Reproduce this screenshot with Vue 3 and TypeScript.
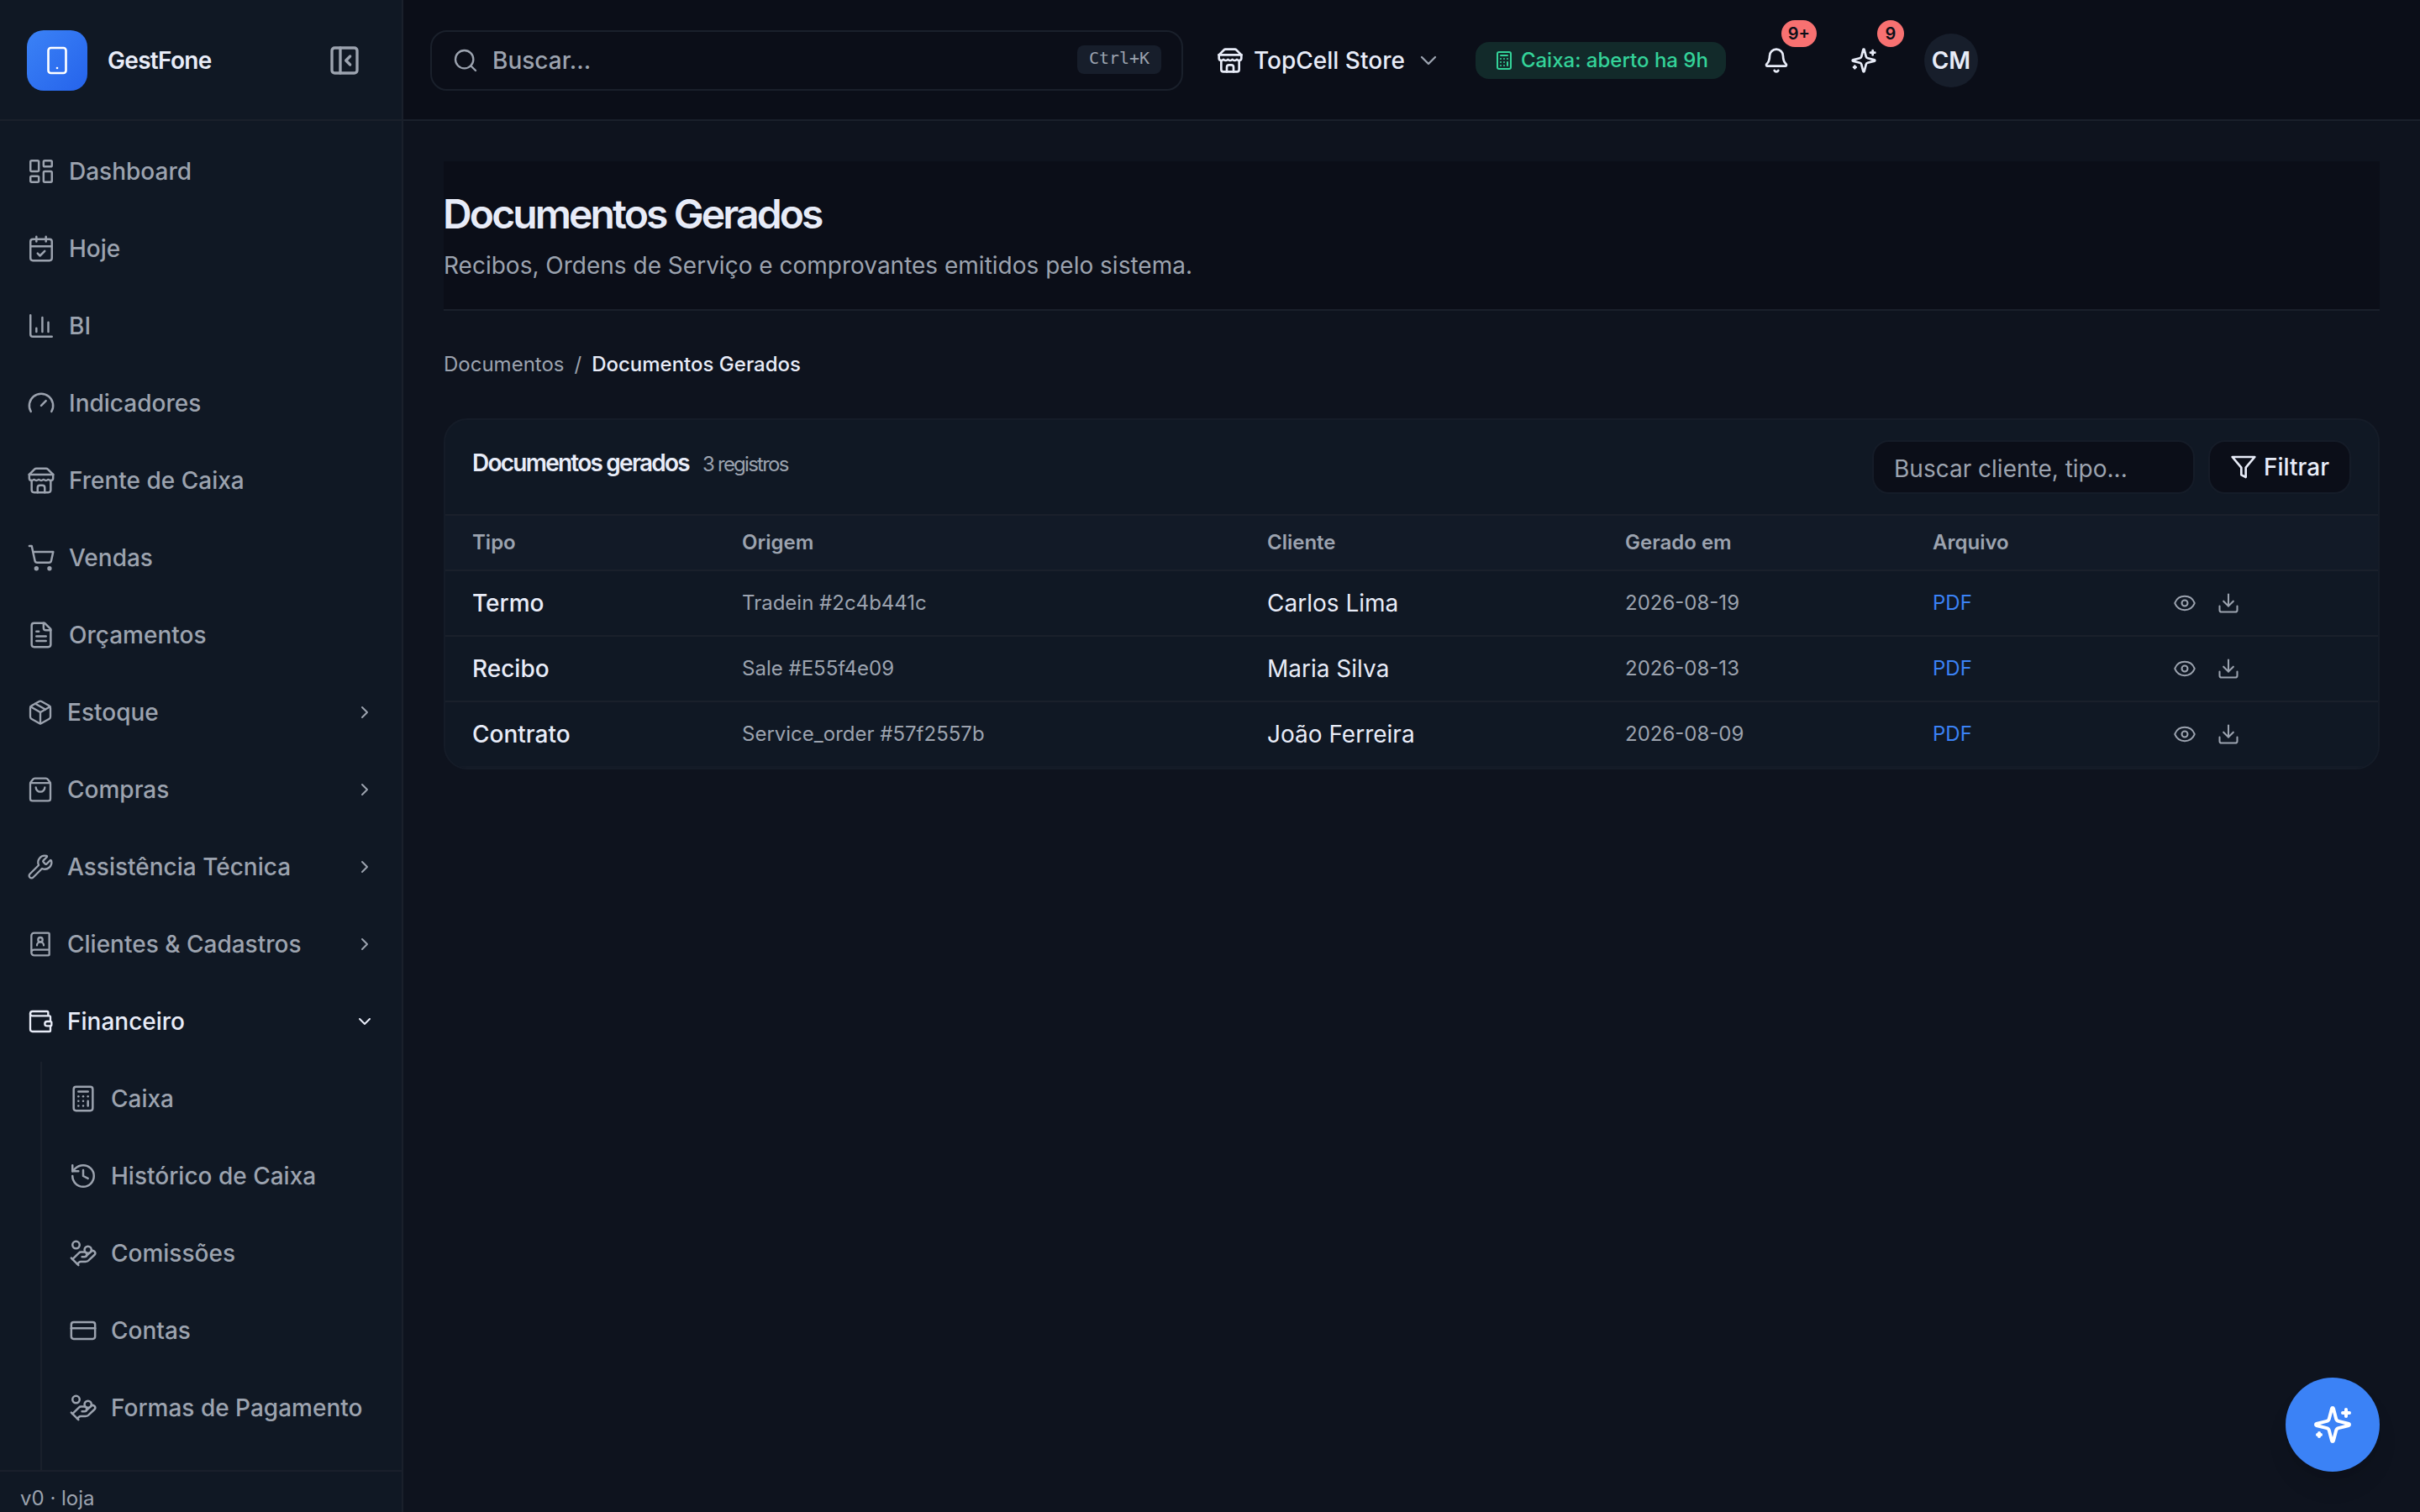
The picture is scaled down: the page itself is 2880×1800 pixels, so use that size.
<script setup lang="ts">
import { defineComponent, h } from 'vue'

const glyphs: Record<string, string> = {
  phone: '<rect x="5" y="2" width="14" height="20" rx="2"/><path d="M12 18h.01"/>',
  panel: '<rect x="3" y="3" width="18" height="18" rx="2"/><path d="M9 3v18"/><path d="m16 15-3-3 3-3"/>',
  dashboard: '<rect x="3" y="3" width="7" height="9" rx="1"/><rect x="14" y="3" width="7" height="5" rx="1"/><rect x="14" y="12" width="7" height="9" rx="1"/><rect x="3" y="16" width="7" height="5" rx="1"/>',
  calendar: '<path d="M8 2v4"/><path d="M16 2v4"/><rect x="3" y="4" width="18" height="18" rx="2"/><path d="M3 10h18"/><path d="m9 16 2 2 4-4"/>',
  chart: '<path d="M3 3v16a2 2 0 0 0 2 2h16"/><path d="M18 17V9"/><path d="M13 17V5"/><path d="M8 17v-3"/>',
  gauge: '<path d="m12 14 4-4"/><path d="M3.34 19a10 10 0 1 1 17.32 0"/>',
  store: '<path d="m2 7 4.41-4.41A2 2 0 0 1 7.83 2h8.34a2 2 0 0 1 1.42.59L22 7"/><path d="M4 12v8a2 2 0 0 0 2 2h12a2 2 0 0 0 2-2v-8"/><path d="M15 22v-4a2 2 0 0 0-2-2h-2a2 2 0 0 0-2 2v4"/><path d="M2 7h20"/><path d="M22 7v3a2 2 0 0 1-2 2a2.7 2.7 0 0 1-1.59-.63.7.7 0 0 0-.82 0A2.7 2.7 0 0 1 16 12a2.7 2.7 0 0 1-1.59-.63.7.7 0 0 0-.82 0A2.7 2.7 0 0 1 12 12a2.7 2.7 0 0 1-1.59-.63.7.7 0 0 0-.82 0A2.7 2.7 0 0 1 8 12a2.7 2.7 0 0 1-1.59-.63.7.7 0 0 0-.82 0A2.7 2.7 0 0 1 4 12a2 2 0 0 1-2-2V7"/>',
  cart: '<circle cx="8" cy="21" r="1"/><circle cx="19" cy="21" r="1"/><path d="M2.05 2.05h2l2.66 12.42a2 2 0 0 0 2 1.58h9.78a2 2 0 0 0 1.95-1.57l1.65-7.43H5.12"/>',
  file: '<path d="M15 2H6a2 2 0 0 0-2 2v16a2 2 0 0 0 2 2h12a2 2 0 0 0 2-2V7Z"/><path d="M14 2v4a2 2 0 0 0 2 2h4"/><path d="M10 9H8"/><path d="M16 13H8"/><path d="M16 17H8"/>',
  box: '<path d="M11 21.73a2 2 0 0 0 2 0l7-4A2 2 0 0 0 21 16V8a2 2 0 0 0-1-1.73l-7-4a2 2 0 0 0-2 0l-7 4A2 2 0 0 0 3 8v8a2 2 0 0 0 1 1.73z"/><path d="M12 22V12"/><path d="M3.29 7 12 12l8.71-5"/><path d="m7.5 4.27 9 5.15"/>',
  bag: '<path d="M16 10a4 4 0 0 1-8 0"/><path d="M3.103 6.034h17.794"/><path d="M3.4 5.467a2 2 0 0 0-.4 1.2V20a2 2 0 0 0 2 2h14a2 2 0 0 0 2-2V6.667a2 2 0 0 0-.4-1.2l-2-2.667A2 2 0 0 0 17 2H7a2 2 0 0 0-1.6.8z"/>',
  wrench: '<path d="M14.7 6.3a1 1 0 0 0 0 1.4l1.6 1.6a1 1 0 0 0 1.4 0l3.106-3.105c.32-.322.863-.22.983.218a6 6 0 0 1-8.259 7.057l-7.91 7.91a1 1 0 0 1-2.999-3l7.91-7.91a6 6 0 0 1 7.057-8.259c.438.12.54.662.219.984z"/>',
  contacts: '<path d="M15 13a3 3 0 1 0-6 0"/><circle cx="12" cy="8" r="2"/><path d="M4 19.5v-15A2.5 2.5 0 0 1 6.5 2H19a1 1 0 0 1 1 1v18a1 1 0 0 1-1 1H6.5a1 1 0 0 1 0-5H20"/>',
  wallet: '<path d="M19 7V4a1 1 0 0 0-1-1H5a2 2 0 0 0 0 4h15a1 1 0 0 1 1 1v4h-3a2 2 0 0 0 0 4h3a1 1 0 0 0 1-1v-2a1 1 0 0 0-1-1"/><path d="M3 5v14a2 2 0 0 0 2 2h15a1 1 0 0 0 1-1v-4"/>',
  calculator: '<rect x="4" y="2" width="16" height="20" rx="2"/><path d="M8 6h8"/><path d="M16 14v4"/><path d="M16 10h.01"/><path d="M12 10h.01"/><path d="M8 10h.01"/><path d="M12 14h.01"/><path d="M8 14h.01"/><path d="M12 18h.01"/><path d="M8 18h.01"/>',
  history: '<path d="M3 12a9 9 0 1 0 9-9 9.75 9.75 0 0 0-6.74 2.74L3 8"/><path d="M3 3v5h5"/><path d="M12 7v5l4 2"/>',
  coins: '<path d="M11 15h2a2 2 0 1 0 0-4h-3c-.6 0-1.1.2-1.4.6L3 17"/><path d="m7 21 1.6-1.4c.3-.4.8-.6 1.4-.6h4c1.1 0 2.1-.4 2.8-1.2l4.6-4.4a2 2 0 0 0-2.75-2.91l-4.2 3.9"/><path d="m2 16 6 6"/><circle cx="16" cy="9" r="2.9"/><circle cx="6" cy="5" r="3"/>',
  card: '<rect x="2" y="5" width="20" height="14" rx="2"/><path d="M2 10h20"/>',
  right: '<path d="m9 18 6-6-6-6"/>',
  down: '<path d="m6 9 6 6 6-6"/>',
  search: '<path d="m21 21-4.34-4.34"/><circle cx="11" cy="11" r="8"/>',
  bell: '<path d="M10.268 21a2 2 0 0 0 3.464 0"/><path d="M3.262 15.326A1 1 0 0 0 4 17h16a1 1 0 0 0 .74-1.673C19.41 13.956 18 12.499 18 8A6 6 0 0 0 6 8c0 4.499-1.411 5.956-2.738 7.326"/>',
  sparkles: '<path d="M9.937 15.5A2 2 0 0 0 8.5 14.063l-6.135-1.582a.5.5 0 0 1 0-.962L8.5 9.936A2 2 0 0 0 9.937 8.5l1.582-6.135a.5.5 0 0 1 .963 0L14.063 8.5A2 2 0 0 0 15.5 9.937l6.135 1.581a.5.5 0 0 1 0 .964L15.5 14.063a2 2 0 0 0-1.437 1.437l-1.582 6.135a.5.5 0 0 1-.963 0z"/><path d="M20 3v4"/><path d="M22 5h-4"/><path d="M4 17v2"/><path d="M5 18H3"/>',
  filter: '<path d="M22 3H2l8 9.46V19l4 2v-8.54z"/>',
  eye: '<path d="M2.062 12.348a1 1 0 0 1 0-.696 10.75 10.75 0 0 1 19.876 0 1 1 0 0 1 0 .696 10.75 10.75 0 0 1-19.876 0"/><circle cx="12" cy="12" r="3"/>',
  download: '<path d="M12 15V3"/><path d="M21 15v4a2 2 0 0 1-2 2H5a2 2 0 0 1-2-2v-4"/><path d="m7 10 5 5 5-5"/>',
}

const Icon = defineComponent({
  props: {
    name: { type: String, required: true },
    size: { type: Number, default: 32 },
    stroke: { type: Number, default: 1.75 },
  },
  setup(props) {
    return () =>
      h('svg', {
        width: props.size,
        height: props.size,
        viewBox: '0 0 24 24',
        fill: 'none',
        stroke: 'currentColor',
        'stroke-width': props.stroke,
        'stroke-linecap': 'round',
        'stroke-linejoin': 'round',
        'aria-hidden': 'true',
        innerHTML: glyphs[props.name],
      })
  },
})

interface NavEntry {
  label: string
  icon: string
}

const links: NavEntry[] = [
  { label: 'Dashboard', icon: 'dashboard' },
  { label: 'Hoje', icon: 'calendar' },
  { label: 'BI', icon: 'chart' },
  { label: 'Indicadores', icon: 'gauge' },
  { label: 'Frente de Caixa', icon: 'store' },
  { label: 'Vendas', icon: 'cart' },
  { label: 'Orçamentos', icon: 'file' },
]

const groups: (NavEntry & { open?: boolean })[] = [
  { label: 'Estoque', icon: 'box' },
  { label: 'Compras', icon: 'bag' },
  { label: 'Assistência Técnica', icon: 'wrench' },
  { label: 'Clientes & Cadastros', icon: 'contacts' },
  { label: 'Financeiro', icon: 'wallet', open: true },
]

const finance: NavEntry[] = [
  { label: 'Caixa', icon: 'calculator' },
  { label: 'Histórico de Caixa', icon: 'history' },
  { label: 'Comissões', icon: 'coins' },
  { label: 'Contas', icon: 'card' },
  { label: 'Formas de Pagamento', icon: 'coins' },
]

const documents = [
  { type: 'Termo', origin: 'Tradein #2c4b441c', client: 'Carlos Lima', date: '2026-08-19' },
  { type: 'Recibo', origin: 'Sale #E55f4e09', client: 'Maria Silva', date: '2026-08-13' },
  { type: 'Contrato', origin: 'Service_order #57f2557b', client: 'João Ferreira', date: '2026-08-09' },
]
</script>

<template>
  <div class="app">
    <aside class="sidebar">
      <div class="brand">
        <span class="logo"><Icon name="phone" :size="36" /></span>
        <span class="brand-name">GestFone</span>
        <button class="collapse" aria-label="Recolher menu"><Icon name="panel" :size="40" :stroke="2" /></button>
      </div>
      <nav class="nav">
        <a v-for="l in links" :key="l.label" class="item">
          <Icon :name="l.icon" :size="34" />
          <span>{{ l.label }}</span>
        </a>
        <a v-for="g in groups" :key="g.label" class="item" :class="{ open: g.open }">
          <Icon :name="g.icon" />
          <span>{{ g.label }}</span>
          <Icon class="chevron" :name="g.open ? 'down' : 'right'" :size="24" :stroke="2" />
        </a>
        <div class="subnav">
          <a v-for="f in finance" :key="f.label" class="item">
            <Icon :name="f.icon" :size="34" />
            <span>{{ f.label }}</span>
          </a>
        </div>
      </nav>
      <footer class="version">v0 · loja</footer>
    </aside>

    <div class="body">
      <header class="topbar">
        <div class="search">
          <Icon name="search" />
          <span class="search-text">Buscar...</span>
          <kbd>Ctrl+K</kbd>
        </div>
        <button class="store">
          <Icon name="store" :stroke="2" />
          <span>TopCell Store</span>
          <Icon class="muted" name="down" />
        </button>
        <div class="cash"><Icon name="calculator" :size="24" :stroke="2" /><span>Caixa: aberto ha 9h</span></div>
        <button class="round" aria-label="Notificações"><Icon name="bell" :stroke="2" /><span class="badge">9+</span></button>
        <button class="round" aria-label="Assistente"><Icon name="sparkles" :stroke="2" /><span class="badge">9</span></button>
        <button class="round"><span class="avatar">CM</span></button>
      </header>

      <main class="content">
        <section class="page-head">
          <h1>Documentos Gerados</h1>
          <p>Recibos, Ordens de Serviço e comprovantes emitidos pelo sistema.</p>
        </section>
        <div class="crumbs"><span>Documentos</span><span>/</span><strong>Documentos Gerados</strong></div>

        <section class="card">
          <div class="card-head">
            <h2>Documentos gerados<small>3 registros</small></h2>
            <div class="tools">
              <div class="field">Buscar cliente, tipo...</div>
              <button class="filter"><Icon name="filter" :stroke="2" /><span>Filtrar</span></button>
            </div>
          </div>
          <table>
            <colgroup>
              <col class="c-type" /><col class="c-origin" /><col class="c-client" /><col class="c-date" /><col class="c-file" /><col />
            </colgroup>
            <thead>
              <tr><th>Tipo</th><th>Origem</th><th>Cliente</th><th>Gerado em</th><th>Arquivo</th><th></th></tr>
            </thead>
            <tbody>
              <tr v-for="d in documents" :key="d.origin">
                <td class="type">{{ d.type }}</td>
                <td class="small">{{ d.origin }}</td>
                <td>{{ d.client }}</td>
                <td class="small">{{ d.date }}</td>
                <td class="small link">PDF</td>
                <td><div class="actions"><Icon name="eye" :size="28" /><Icon name="download" :size="28" /></div></td>
              </tr>
            </tbody>
          </table>
        </section>
      </main>
    </div>

    <button class="fab" aria-label="Abrir assistente"><Icon name="sparkles" :size="48" :stroke="2" /></button>
  </div>
</template>

<style>
body {
  margin: 0;
  background: #0e131e;
}
</style>

<style scoped>
.app {
  --line: #1a202b;
  --muted: #9ca3af;
  --text: #e8ecf8;
  display: flex;
  width: 2880px;
  height: 1800px;
  overflow: hidden;
  background: #0e131e;
  color: var(--text);
  font: 400 28px/42px Inter, sans-serif;
}
.app * {
  box-sizing: border-box;
}
.app svg {
  display: block;
  flex: none;
}
button {
  padding: 0;
  border: 0;
  background: none;
  color: inherit;
  font: inherit;
}
.sidebar {
  display: flex;
  flex-direction: column;
  flex: none;
  width: 480px;
  background: #101824;
  border-right: 2px solid var(--line);
}
.brand {
  display: flex;
  align-items: center;
  flex: none;
  height: 144px;
  padding: 2px 48px 0 32px;
  border-bottom: 2px solid var(--line);
}
.logo {
  display: flex;
  align-items: center;
  justify-content: center;
  width: 72px;
  height: 72px;
  border-radius: 20px;
  background: linear-gradient(135deg, #3b82f6, #2563eb);
  color: #fff;
}
.brand-name {
  margin-left: 24px;
  font-weight: 600;
  letter-spacing: -0.7px;
}
.collapse {
  margin-left: auto;
  color: var(--muted);
}
.nav {
  display: flex;
  flex-direction: column;
  flex: 1;
  gap: 4px;
  min-height: 0;
  overflow: hidden;
  padding: 16px 16px 0;
}
.item {
  display: flex;
  align-items: center;
  flex: none;
  gap: 16px;
  height: 88px;
  padding: 0 16px;
  color: var(--muted);
  font-weight: 500;
}
.item.open {
  color: var(--text);
}
.chevron {
  margin-left: auto;
}
.subnav {
  display: flex;
  flex-direction: column;
  flex: 1;
  gap: 4px;
  margin-left: 32px;
  padding-left: 16px;
  border-left: 2px solid var(--line);
}
.version {
  flex: none;
  height: 50px;
  padding: 14px 24px 0;
  border-top: 2px solid var(--line);
  color: var(--muted);
  font-size: 24px;
  line-height: 36px;
}
.body {
  display: flex;
  flex-direction: column;
  flex: 1;
  min-width: 0;
}
.topbar {
  display: flex;
  align-items: center;
  flex: none;
  gap: 16px;
  height: 144px;
  padding: 2px 32px 0;
  background: #0b0e18;
  border-bottom: 2px solid var(--line);
}
.search {
  display: flex;
  align-items: center;
  gap: 16px;
  width: 896px;
  height: 72px;
  padding: 0 24px;
  border: 2px solid var(--line);
  border-radius: 20px;
  color: var(--muted);
}
.search-text {
  font-weight: 500;
}
kbd {
  width: 100px;
  height: 34px;
  margin: -2px 0 0 auto;
  border-radius: 8px;
  background: #171e2b;
  font: 500 20px/30px "DejaVu Sans Mono", monospace;
  text-align: center;
}
.store {
  display: flex;
  align-items: center;
  gap: 12px;
  padding: 0 24px;
  font-weight: 500;
}
.muted {
  color: var(--muted);
}
.cash {
  display: flex;
  align-items: center;
  gap: 8px;
  height: 44px;
  padding: 0 21px 0 22px;
  border-radius: 16px;
  background: #122a2a;
  color: #34d399;
  font-size: 24px;
  font-weight: 500;
}
.round {
  position: relative;
  display: flex;
  align-items: center;
  justify-content: center;
  width: 88px;
  height: 88px;
}
.badge {
  position: absolute;
  top: -4px;
  right: -4px;
  min-width: 32px;
  height: 32px;
  padding: 0 8px;
  border-radius: 16px;
  background: #f87171;
  color: #0b0e18;
  font-size: 20px;
  font-weight: 600;
  line-height: 32px;
  text-align: center;
}
.avatar {
  width: 64px;
  height: 64px;
  border-radius: 50%;
  background: #171e2b;
  font-weight: 600;
  line-height: 64px;
  text-align: center;
}
.content {
  padding: 48px;
}
.page-head {
  height: 178px;
  padding-top: 33px;
  background: #0b0e18;
  border-bottom: 2px solid var(--line);
}
h1 {
  margin: 0 0 0 -1px;
  font-size: 48px;
  font-weight: 600;
  line-height: 60px;
  letter-spacing: -0.06em;
}
p {
  margin: 10px 0 0;
  color: var(--muted);
}
.crumbs {
  display: flex;
  gap: 12px;
  margin-top: 46px;
  color: var(--muted);
  font-size: 24px;
  line-height: 36px;
}
.crumbs strong {
  color: var(--text);
  font-weight: 500;
}
.card {
  margin-top: 46px;
  overflow: hidden;
  background: #101824;
  border: 2px solid #151c28;
  border-radius: 28px;
}
.card-head {
  display: flex;
  justify-content: space-between;
  height: 114px;
  padding: 24px 32px 0;
  border-bottom: 2px solid var(--line);
}
h2 {
  margin: 6px 0 0;
  font-size: 28px;
  font-weight: 600;
  letter-spacing: -1.76px;
}
h2 small {
  margin-left: 16px;
  color: var(--muted);
  font-size: 24px;
  font-weight: 400;
}
.tools {
  display: flex;
  gap: 16px;
}
.field {
  width: 384px;
  height: 64px;
  padding: 11px 24px 0;
  background: #0b0e18;
  border: 2px solid #151c28;
  border-radius: 20px;
  color: var(--muted);
}
.filter {
  display: flex;
  align-items: center;
  gap: 8px;
  height: 64px;
  padding: 0 24px;
  background: #0b0e18;
  border: 2px solid #151c28;
  border-radius: 20px;
  font-weight: 500;
}
table {
  width: 100%;
  table-layout: fixed;
  border-collapse: separate;
  border-spacing: 0;
}
.c-type {
  width: 321px;
}
.c-origin {
  width: 625px;
}
.c-client {
  width: 426px;
}
.c-date {
  width: 366px;
}
.c-file {
  width: 286px;
}
th,
td {
  padding: 0 32px;
  border-bottom: 2px solid var(--line);
  text-align: left;
}
th {
  height: 66px;
  background: #121a27;
  color: var(--muted);
  font-size: 24px;
  font-weight: 600;
}
td {
  height: 78px;
}
tbody tr:last-child td {
  border-bottom-color: #141b27;
}
.type {
  font-weight: 500;
}
.small {
  color: var(--muted);
  font-size: 24px;
}
.small.link {
  color: #3b82f6;
}
.actions {
  display: flex;
  gap: 24px;
  color: var(--muted);
}
.fab {
  position: absolute;
  top: 1640px;
  left: 2720px;
  display: flex;
  align-items: center;
  justify-content: center;
  width: 112px;
  height: 112px;
  border-radius: 50%;
  background: #3b82f6;
  color: #fff;
  box-shadow: 0 20px 30px -6px rgba(0, 0, 0, 0.1), 0 8px 12px -8px rgba(0, 0, 0, 0.1);
}
</style>
